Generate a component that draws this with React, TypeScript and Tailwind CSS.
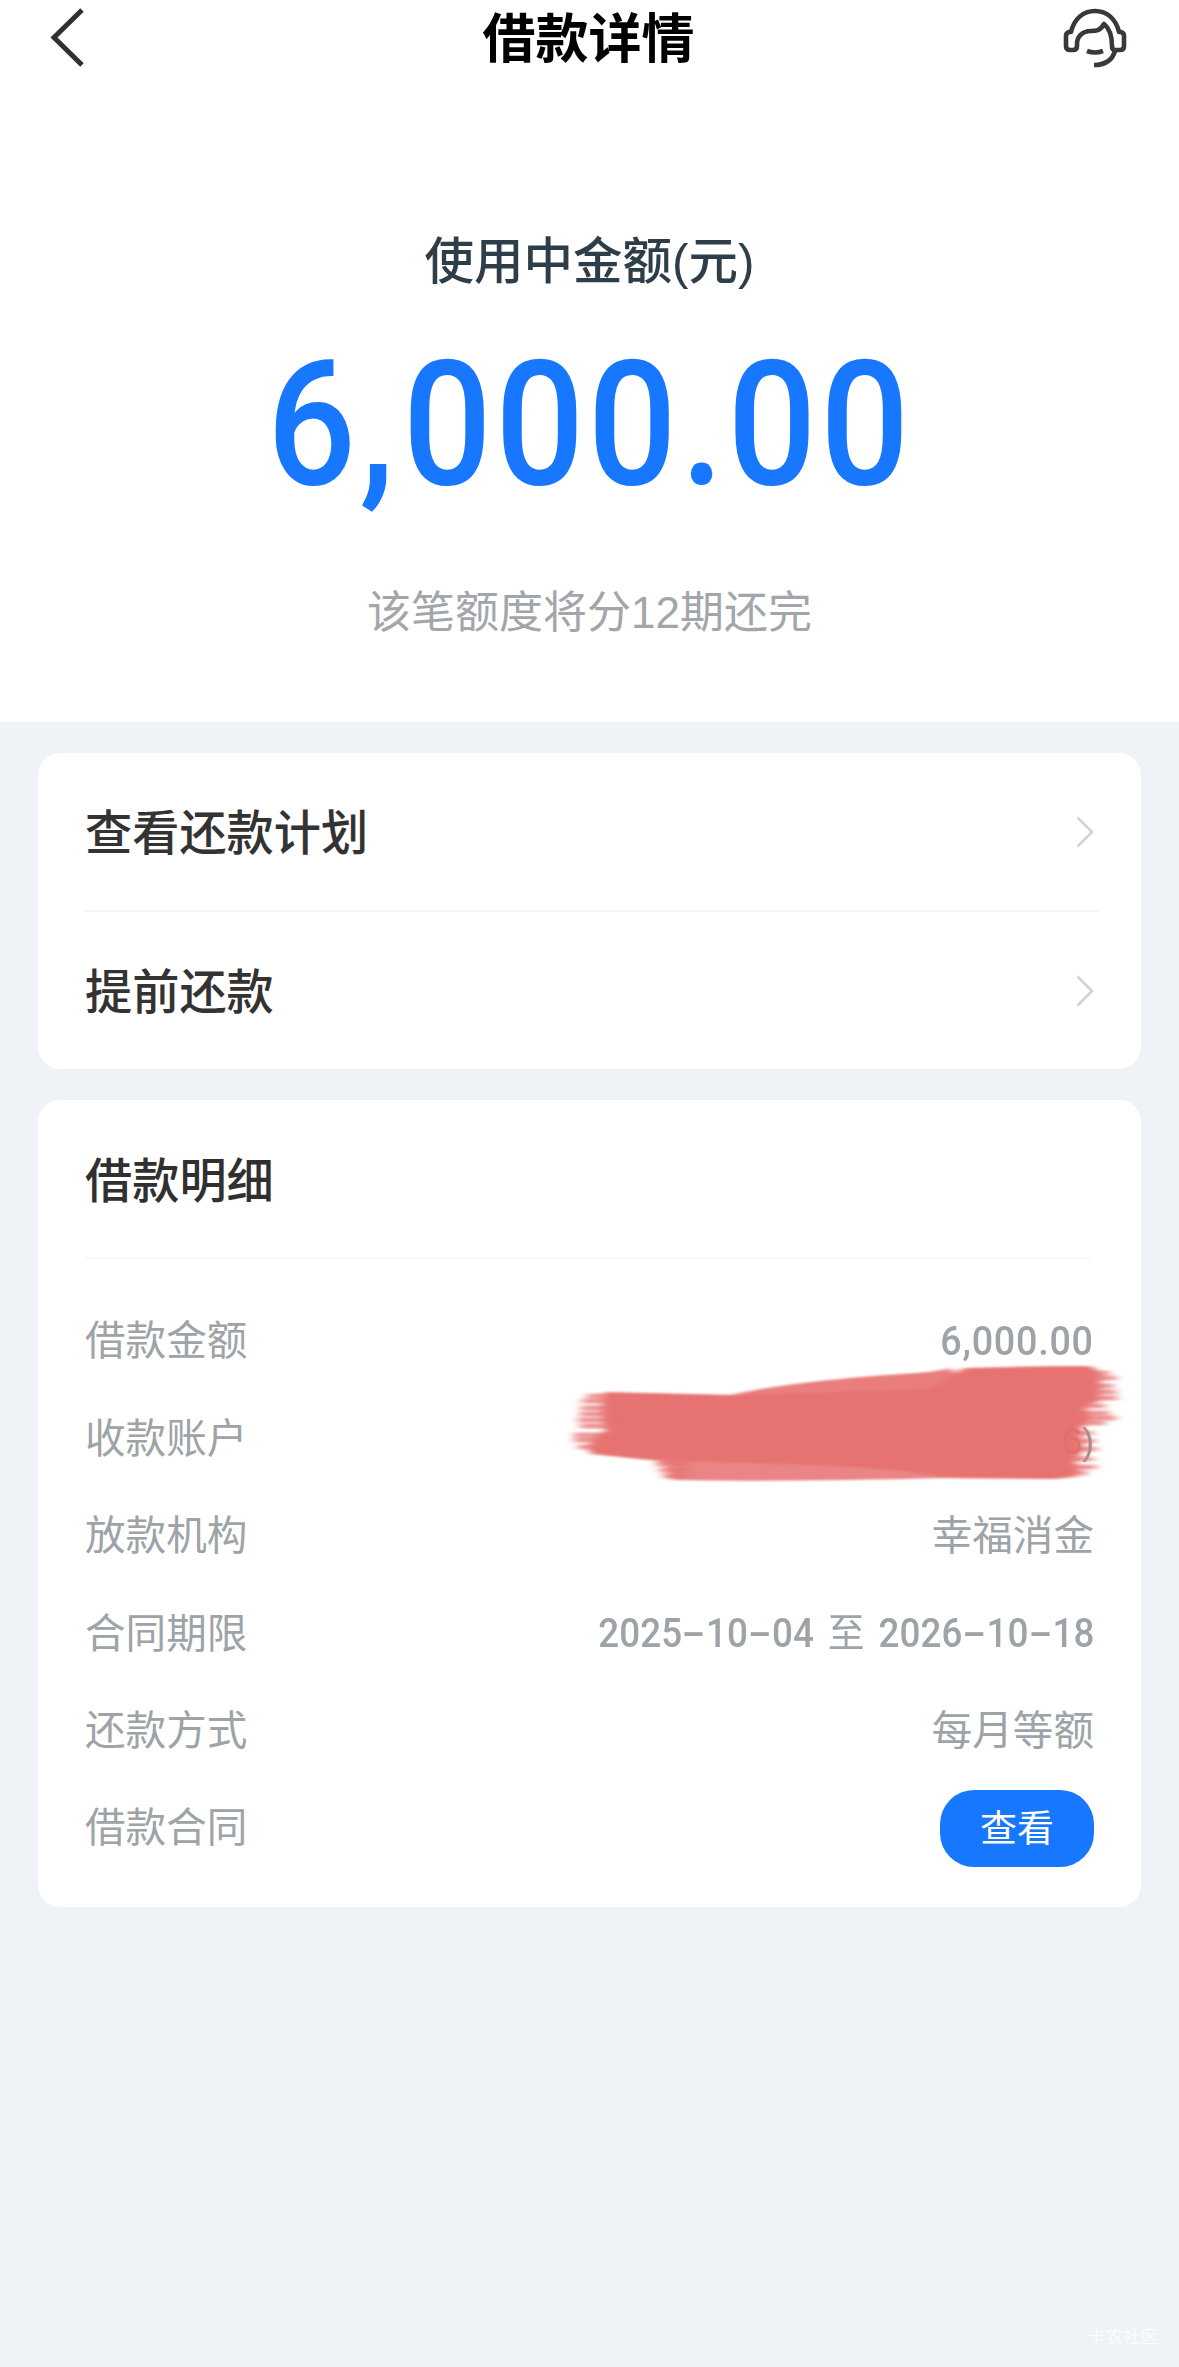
import { ReactNode } from "react";

const BackIcon = () => (
  <svg className="w-[36px] h-[60px]" viewBox="0 0 36 60" fill="none">
    <path d="M32 2 L4 29.5 L32 57" stroke="#303033" strokeWidth="5" />
  </svg>
);

const ServiceIcon = () => (
  <svg
    className="w-[64px] h-[60px]"
    viewBox="0 0 64 60"
    fill="none"
    stroke="#38393b"
    strokeWidth="4.6"
    strokeLinejoin="round"
  >
    <path d="M8 24 C11 11 20 3 32 3 C44 3 53 11 56 24 L58 24 Q61 25 61 28 V38 Q61 42 57 42 H52 Q49 42 49 38 C49 27 46 20 41 16 C37 23 33 23 28 23 C19 23 14 29 14 36 V38 Q14 42 10 42 H7 Q3 42 3 38 V28 Q3 25 6 24 Z" />
    <path d="M52 43 C49 53 41 57 31 57" />
    <path d="M24 43 Q32 46 40 43" />
  </svg>
);

const ArrowIcon = () => (
  <svg className="w-[18px] h-[32px]" viewBox="0 0 18 32" fill="none">
    <path d="M1.500 1.500 L16 16 L1.500 30.500" stroke="#d2d2d2" strokeWidth="2.500" />
  </svg>
);

// [y, left, right] of the dry-brush hairs at both ends of the stroke
const hairs = [
  [1372, 1085, 1110],
  [1377, 1085, 1117],
  [1385, 1085, 1114],
  [1391, 1085, 1117],
  [1397, 1085, 1118],
  [1405, 1080, 1106],
  [1412, 1080, 1110],
  [1417, 1080, 1117],
  [1422, 1080, 1106],
  [1432, 1070, 1094],
  [1440, 1070, 1096],
  [1448, 1070, 1098],
  [1458, 1070, 1094],
  [1466, 1070, 1097],
  [1472, 1060, 1088],
  [1395, 588, 620],
  [1400, 583, 620],
  [1407, 582, 620],
  [1413, 581, 620],
  [1419, 579, 620],
  [1425, 581, 620],
  [1434, 575, 620],
  [1439, 575, 620],
  [1446, 579, 620],
  [1463, 657, 690],
  [1469, 660, 690],
  [1475, 664, 690],
];

const Brush = () => (
  <svg
    className="absolute left-[474px] -top-[34px] w-[580px] h-[135px]"
    viewBox="560 1355 580 135"
    fill="none"
  >
    <defs>
      <filter id="smear" x="-5%" y="-5%" width="110%" height="110%">
        <feGaussianBlur stdDeviation="5 1.2" />
      </filter>
    </defs>
    <g filter="url(#smear)">
      <path
        d="M650 1456 L1040 1462 L1080 1476 Q1060 1478 948 1477 Q785 1481 674 1479 Q668 1476 668 1464 Z"
        fill="#e98584"
      />
      <path
        d="M736 1393 Q800 1379 931 1371 L952 1367 L970 1394 L736 1400 Z"
        fill="#e97e7d"
      />
      <path
        d="M606 1391 L736 1394 Q840 1391 930 1388 L965 1367 Q1030 1365 1090 1365 Q1102 1368 1102 1380 L1100 1400 L1086 1406 L1092 1417 L1082 1428 L1084 1450 L1076 1460 L1080 1470 Q1076 1478 1050 1478 L948 1477 Q900 1466 780 1463 L650 1459 L592 1453 Q588 1446 594 1438 L606 1430 L602 1410 Z"
        fill="#e67371"
      />
      {hairs.map(([y, left, right]) => (
        <path
          key={`${y}-${left}`}
          d={`M${left} ${y} H${right}`}
          stroke="#e67371"
          strokeWidth="4.800"
          opacity="0.75"
        />
      ))}
    </g>
  </svg>
);

type RowProps = {
  label: string;
  children: ReactNode;
};

const Dash = () => (
  <span className="inline-block w-[26px] text-center scale-x-[1.9]">-</span>
);

const MenuRow = ({ label }: { label: string }) => (
  <div className="h-[157px] flex items-center justify-between">
    <p className="pt-[4px] text-[47.2px] font-medium text-[#333333]">{label}</p>
    <ArrowIcon />
  </div>
);

const DetailRow = ({ label, children }: RowProps) => (
  <div className="relative h-[97.4px] flex items-center justify-between text-[40.6px] text-[#9da3a7]">
    <p>{label}</p>
    {children}
  </div>
);

const App = () => {
  return (
    <main className="w-[1179px] h-[2367px] flex flex-col bg-[#eff3f8] overflow-hidden leading-none whitespace-nowrap font-['Liberation_Sans','Noto_Sans_CJK_SC',sans-serif]">
      <div className="h-[722px] shrink-0 bg-white">
        <header className="h-[76px] flex items-center justify-between pl-[50px] pr-[52px]">
          <div className="w-[64px]">
            <BackIcon />
          </div>
          <h1 className="pt-[3px] text-[53px] font-bold text-black">借款详情</h1>
          <ServiceIcon />
        </header>
        <section className="flex flex-col items-center">
          <p className="mt-[161px] text-[49.5px] font-medium text-[#2d3e48]">
            使用中金额(元)
          </p>
          <p className="mt-[73px] h-[130px] flex items-center font-['Roboto',sans-serif] font-medium text-[174px] tracking-[4px] scale-x-90 text-[#1777ff]">
            6<span className="tracking-[9px]">,</span>000
            <span className="tracking-[4px]">.</span>00
          </p>
          <p className="mt-[101px] text-[44px] text-[#a2a6aa]">
            该笔额度将分12期还完
          </p>
        </section>
      </div>

      <section className="mt-[31px] mx-[38px] h-[316px] shrink-0 px-[47px] rounded-[22px] bg-white">
        <MenuRow label="查看还款计划" />
        <div className="h-[2px] -mr-[4px] bg-[#f4f5f6]"></div>
        <MenuRow label="提前还款" />
      </section>

      <section className="mt-[31px] mx-[38px] h-[807px] shrink-0 px-[47px] rounded-[22px] bg-white">
        <h2 className="h-[157px] pt-[6px] flex items-center text-[47.2px] font-medium text-[#303030]">
          借款明细
        </h2>
        <div className="h-[2px] mb-[34px] mr-[4px] bg-[#f6f7f8]"></div>
        <DetailRow label="借款金额">
          <p className="font-['Roboto',sans-serif] font-medium text-[41px] tracking-[0.800px] origin-right scale-x-[0.92]">
            6,000.00
          </p>
        </DetailRow>
        <DetailRow label="收款账户">
          <Brush />
          <p className="relative pt-[6px] text-[36px] text-[#b08a89]">
            <span className="text-[#e16f6d]">6</span>)
          </p>
        </DetailRow>
        <DetailRow label="放款机构">
          <p>幸福消金</p>
        </DetailRow>
        <DetailRow label="合同期限">
          <p className="flex items-center font-['Roboto','Noto_Sans_CJK_SC',sans-serif] font-medium text-[40px] tracking-[0.100px] origin-right scale-x-[0.92]">
            2025
            <Dash />
            10
            <Dash />
            04<span className="mx-[15px] font-normal">至</span>2026
            <Dash />
            10
            <Dash />
            18
          </p>
        </DetailRow>
        <DetailRow label="还款方式">
          <p>每月等额</p>
        </DetailRow>
        <DetailRow label="借款合同">
          <button className="w-[154px] h-[77px] flex items-center justify-center rounded-[34px] bg-[#1777ff] pt-[2px] text-[37px] text-white">
            查看
          </button>
        </DetailRow>
      </section>

      <footer className="mt-auto mb-[21px] mr-[21px] text-right text-[17.5px] text-[#fbfcfe]">
        卡农社区
      </footer>
    </main>
  );
};

export default App;
